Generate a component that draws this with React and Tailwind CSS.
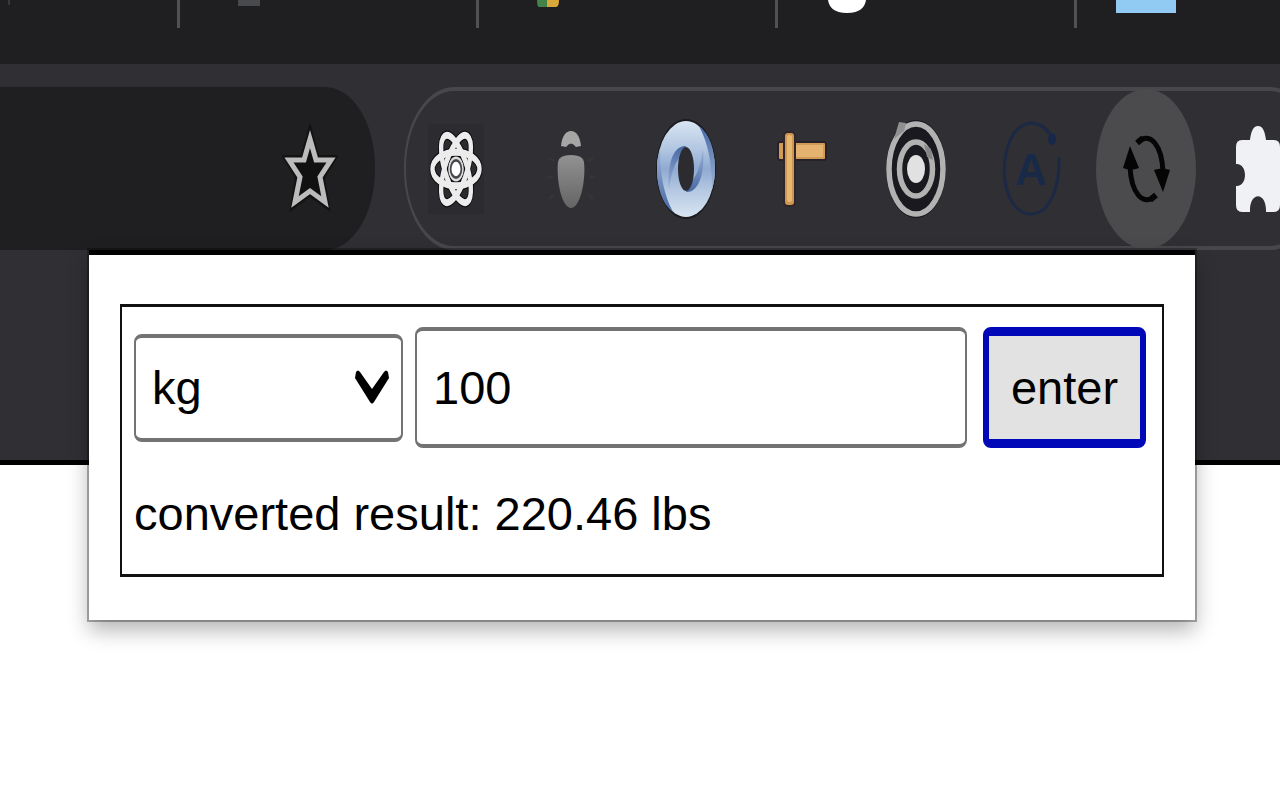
import { useState } from "react";

function Icon({ children }) {
  return (
    <svg viewBox="-50 -80 100 160" className="h-[160px] w-[100px]" aria-hidden="true">
      {children}
    </svg>
  );
}

function ReactIcon() {
  return (
    <Icon>
      <rect x="-28" y="-45" width="56" height="90" fill="#2c2b30" />
      <g transform="scale(1 1.6)" fill="none" stroke="#0d0d10" strokeWidth="6">
        <ellipse rx="23.5" ry="10.5" />
        <ellipse rx="23.5" ry="10.5" transform="rotate(60)" />
        <ellipse rx="23.5" ry="10.5" transform="rotate(120)" />
      </g>
      <g transform="scale(1 1.6)" fill="none" stroke="#ececec" strokeWidth="4.4">
        <ellipse rx="23.5" ry="10.5" />
        <ellipse rx="23.5" ry="10.5" transform="rotate(60)" />
        <ellipse rx="23.5" ry="10.5" transform="rotate(120)" />
        <circle r="7" fill="#48484c" stroke="#ddd" strokeWidth="1.5" />
        <circle r="4.5" fill="#fff" stroke="none" />
      </g>
    </Icon>
  );
}

function BugIcon() {
  return (
    <Icon>
      <defs>
        <linearGradient id="bug" x2="0" y2="1">
          <stop offset="0" stopColor="#929292" />
          <stop offset="1" stopColor="#646464" />
        </linearGradient>
      </defs>
      <path d="M-22-11l5 3M-24 8h6M-22 30l5-5M22-11l-5 3M24 8h-6M22 30l-5-5" stroke="#353537" strokeWidth="3" />
      <path d="M-10-23C-9-33-5-38 0-38S9-33 10-23L5-22Q0-29-5-22Z" fill="#a6a6a6" />
      <path d="M-13-7Q-12-14 0-14Q12-14 13-7C15 12 9 39 0 39S-15 12-13-7Z" fill="url(#bug)" />
    </Icon>
  );
}

function RingIcon() {
  return (
    <Icon>
      <defs>
        <linearGradient id="ring" x2="0" y2="1">
          <stop offset="0" stopColor="#d8e5f2" />
          <stop offset="0.28" stopColor="#b4c8e2" />
          <stop offset="0.5" stopColor="#90aad1" />
          <stop offset="0.72" stopColor="#b4c8e2" />
          <stop offset="1" stopColor="#d8e5f2" />
        </linearGradient>
        <linearGradient id="ring-right" x2="0" y2="1">
          <stop offset="0" stopColor="#4768a4" />
          <stop offset="1" stopColor="#9db4d8" />
        </linearGradient>
        <linearGradient id="ring-left" x2="0" y2="1">
          <stop offset="0" stopColor="#9db4d8" />
          <stop offset="1" stopColor="#4768a4" />
        </linearGradient>
      </defs>
      <ellipse rx="30" ry="50" fill="#1b1b1e" />
      <ellipse rx="29" ry="48" fill="url(#ring)" />
      <path d="M13-43C24-35 29-18 29 0C29 8 28 14 26 20C26-6 22-26 13-43Z" fill="url(#ring-right)" />
      <path d="M-13 43C-24 35-29 18-29 0C-29-8-28-14-26-20C-26 6-22 26-13 43Z" fill="url(#ring-left)" />
      <path d="M0-23C-13-24-19-4-17 20C-15 6-12-6-4-14Z" fill="url(#ring-right)" />
      <path d="M0 23C13 24 19 4 17-20C15-6 12 6 4 14Z" fill="url(#ring-left)" />
      <ellipse rx="8" ry="22" fill="#2c2c30" />
    </Icon>
  );
}

function SignIcon() {
  return (
    <Icon>
      <rect x="-23" y="-27" width="48" height="18" rx="2" fill="#cf9b57" stroke="#29212a" strokeWidth="2" />
      <rect x="-5" y="-24" width="27" height="12" fill="#e3b36f" />
      <rect x="-17" y="-37" width="11" height="74" rx="4" fill="#cf9850" stroke="#30252a" strokeWidth="2" />
      <rect x="-14" y="-34" width="5" height="67" rx="2" fill="#e6b771" />
    </Icon>
  );
}

function TargetIcon() {
  return (
    <Icon>
      <ellipse rx="30" ry="49" fill="#19191f" />
      <g fill="none" stroke="#b2b2b2" strokeWidth="5.5">
        <ellipse rx="27" ry="45" />
        <ellipse rx="16.5" ry="27" />
      </g>
      <path d="M-17-47L-10-46L-12-38L-22-30Z" fill="#909090" />
      <path d="M8-25L15-20L17-9L11-12Z" fill="#858585" />
      <ellipse rx="9" ry="14" fill="#e1e1e1" />
    </Icon>
  );
}

function LetterIcon() {
  return (
    <Icon>
      <path d="M20-34C5-54-16-48-24-20C-32 12-21 45 0 45C19 45 29 18 28-12" fill="none" stroke="#1c2945" strokeWidth="3" />
      <ellipse cx="21" cy="-30" rx="4" ry="6" fill="#18284b" />
      <text y="16" textAnchor="middle" fontFamily="Liberation Sans, sans-serif" fontWeight="700" fontSize="44" fill="#192948">A</text>
    </Icon>
  );
}

function SyncIcon() {
  return (
    <Icon>
      <g fill="none" stroke="#050505" strokeWidth="5">
        <path d="M-8-27C4-38 16-24 17 3" />
        <path d="M9 27C-3 38-15 24-16-3" />
      </g>
      <path d="M-9-26L-3-31M10 26L4 31" stroke="#050505" strokeWidth="6" />
      <path d="M8 1Q16-2 24 1L17 23ZM-23-1Q-15 2-7-1L-16-23Z" fill="#050505" />
    </Icon>
  );
}

function PuzzleIcon() {
  return (
    <Icon>
      <path d="M-25-22Q-25-29-19-29H-11C-10-37-8-43-3-43S4-37 5-29H13Q19-29 19-22V-8C29-7 29 19 19 20V36Q19 43 13 43H5C6 22-12 22-11 43H-19Q-25 43-25 36V17C-13 18-13-6-25-5Z" fill="#eff1f4" />
    </Icon>
  );
}

const extensions = [
  { name: "React Developer Tools", Glyph: ReactIcon },
  { name: "Bug tracker", Glyph: BugIcon },
  { name: "Ring", Glyph: RingIcon },
  { name: "Signpost", Glyph: SignIcon },
  { name: "Target", Glyph: TargetIcon },
  { name: "Letter", Glyph: LetterIcon },
  { name: "Unit converter", Glyph: SyncIcon, active: true },
  { name: "Extensions", Glyph: PuzzleIcon },
];

const favicons = [
  <path key="a" d="M19 0H41V6H19Z" fill="#48494d" />,
  <g key="b">
    <path d="M19 0H29V7H21Q19 7 19 0Z" fill="#438348" />
    <path d="M29 0H41Q41 7 38 7H29Z" fill="#d9a83b" />
  </g>,
  <path key="c" d="M11 0H49C48 7 43 13 30 13S12 7 11 0Z" fill="#fff" />,
  <path key="d" d="M0 0H60V13H0Z" fill="#91cbf3" />,
];

function TabStrip() {
  return (
    <div className="flex h-16 overflow-hidden bg-[#1f1f21]">
      <div className="w-[177px] shrink-0 pl-2">
        <div className="h-[5px] w-[2px] bg-[#39393c]" />
      </div>
      {favicons.map((icon, i) => (
        <div key={i} className="flex w-[299px] shrink-0 gap-[39px]">
          <div className="h-7 w-[3px] bg-[#505155]" />
          <svg viewBox="0 0 60 28" className="h-7 w-[60px]" aria-hidden="true">{icon}</svg>
        </div>
      ))}
    </div>
  );
}

function Toolbar() {
  return (
    <div className="flex gap-[29px] overflow-hidden pt-[23px]">
      <div className="flex h-[163px] min-w-0 flex-1 items-center justify-end bg-[#1f1f21] pr-[37px] [border-bottom-right-radius:50px_80px] [border-top-right-radius:50px_80px]">
        <button aria-label="Bookmark this tab">
          <svg viewBox="0 0 56 90" className="h-[90px] w-14" aria-hidden="true">
            <path d="M28 13L34 35H50L39 53L43 79L28 68L13 79L17 53L6 35H22Z" fill="#080809" stroke="#131314" strokeWidth="8" />
            <path d="M28 15L34 36H49L38 53L43 78L28 67L13 78L18 53L7 36H22Z" fill="#111112" stroke="#bcbcbc" strokeWidth="5" />
          </svg>
        </button>
      </div>
      <div className="-mr-10 flex h-[163px] w-[916px] shrink-0 items-center gap-[15px] rounded-[50px/80px] border-x-2 border-y-4 border-[#48474c]">
        {extensions.map(({ name, Glyph, active }) => (
          <button
            key={name}
            aria-label={name}
            className={active ? "-my-1 shrink-0 rounded-[50%] bg-[#4b4b4d]" : "shrink-0"}
          >
            <Glyph />
          </button>
        ))}
      </div>
    </div>
  );
}

function Converter() {
  const [unit, setUnit] = useState("kg");
  const [amount, setAmount] = useState("100");
  const [result, setResult] = useState("220.46 lbs");

  function convert(event) {
    event.preventDefault();
    const value = Number(amount);
    setResult(unit === "kg" ? `${(value * 2.20462).toFixed(2)} lbs` : `${(value / 2.20462).toFixed(2)} kg`);
  }

  return (
    <form
      onSubmit={convert}
      className="border-x-2 border-y-[3px] border-[#111] pt-5 pr-4 pb-7 pl-3 text-[47px] leading-[64px] text-black"
    >
      <div className="flex items-center">
        <div className="relative mr-3 w-[269px] shrink-0">
          <select
            aria-label="Unit"
            value={unit}
            onChange={(e) => setUnit(e.target.value)}
            className="block h-[108px] w-full appearance-none rounded-lg border-x-2 border-y-4 border-[#737373] bg-white pl-4 outline-none"
          >
            <option>kg</option>
            <option>lbs</option>
          </select>
          <svg viewBox="0 0 36 38" className="pointer-events-none absolute top-[34px] right-[13px] h-[38px] w-9" aria-hidden="true">
            <path d="M2 4Q4 1 6 4L18 21L30 4Q32 1 34 4L35 10L20 34Q18 37 16 34L1 10Z" fill="#000" />
          </svg>
        </div>
        <input
          aria-label="Amount"
          value={amount}
          onChange={(e) => setAmount(e.target.value)}
          className="mr-4 h-[121px] min-w-0 flex-1 rounded-lg border-x-2 border-y-4 border-[#737373] bg-white px-4 outline-none"
        />
        <button className="h-[121px] w-[163px] shrink-0 rounded-lg border-x-6 border-y-[9px] border-[#0008b8] bg-[#e2e2e2]">
          enter
        </button>
      </div>
      <p className="mt-[34px]">converted result: {result}</p>
    </form>
  );
}

export default function App() {
  return (
    <div className="relative min-h-screen overflow-hidden bg-white font-['Liberation_Sans',sans-serif]">
      <header className="h-[465px] border-b-[5px] border-black bg-[#302f34]">
        <TabStrip />
        <Toolbar />
      </header>
      <main className="absolute top-[250px] right-[85px] left-[89px] border-t-[5px] border-black bg-white px-[31px] pt-[49px] pb-[43px] shadow-[0_0_0_2px_rgba(0,0,0,0.3),0_10px_20px_rgba(0,0,0,0.3)]">
        <Converter />
      </main>
    </div>
  );
}
